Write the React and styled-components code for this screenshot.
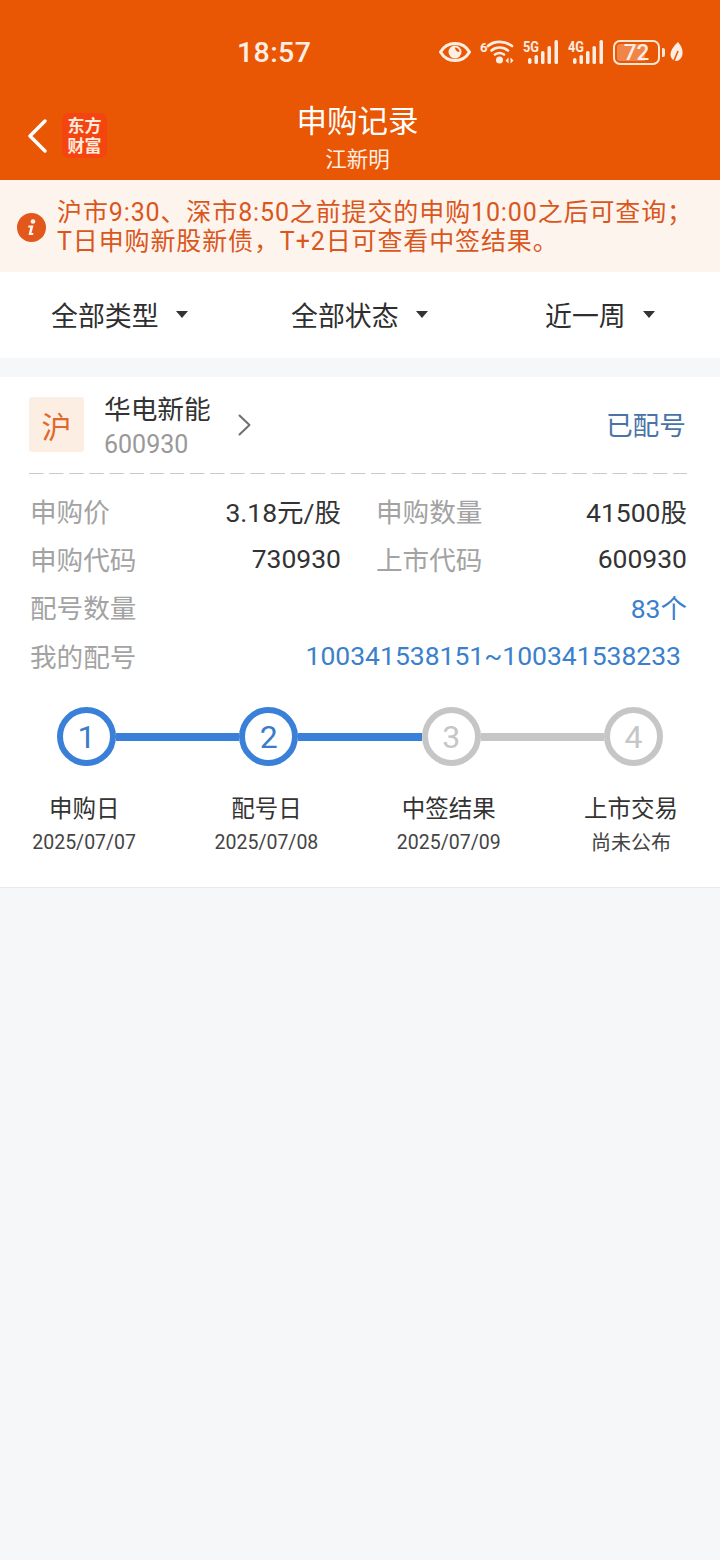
import React from 'react';
import styled, { createGlobalStyle } from 'styled-components';

const GlobalStyle = createGlobalStyle`
  html, body { margin: 0; padding: 0; background: #f6f7f9; }
  body { font-family: Roboto, "Noto Sans CJK SC", sans-serif; }
  * { box-sizing: border-box; }
`;

const Page = styled.div`
  width: 720px;
  height: 1560px;
  background: #f6f7f9;
  overflow: hidden;
`;

const Header = styled.header`
  height: 180px;
  background: #ea5704;
  color: #fff;
  display: flex;
  flex-direction: column;
`;

const StatusBar = styled.div`
  height: 100px;
  display: flex;
  align-items: center;
  padding: 4px 37px 0 237px;
  justify-content: space-between;
`;

const Clock = styled.span`
  font-size: 28.5px;
  font-weight: 500;
  letter-spacing: 0.4px;
  color: #fdeee4;
`;

const StatusIcons = styled.div`
  display: flex;
  align-items: center;
  gap: 9px;
`;

const SignalSvg = styled.svg`
  margin-top: -3px;
`;

const Battery = styled.div`
  display: flex;
  align-items: center;
  gap: 2px;
  margin-right: -4px;
`;

const BatteryBody = styled.div`
  width: 47px;
  height: 25px;
  border: 2px solid #fde6d6;
  border-radius: 7px;
  padding: 2px;
  position: relative;
  display: flex;
`;

const BatteryFill = styled.div`
  width: 72%;
  background: rgba(255, 255, 255, 0.28);
  border-radius: 3px 0 0 3px;
`;

const BatteryLevel = styled.span`
  position: absolute;
  inset: 0;
  display: flex;
  align-items: center;
  justify-content: center;
  font-size: 22.5px;
  font-weight: 500;
  color: #fdeee4;
`;

const BatteryCap = styled.div`
  width: 3px;
  height: 9px;
  background: #fde6d6;
  border-radius: 0 2px 2px 0;
`;

const NavBar = styled.div`
  height: 80px;
  display: flex;
  position: relative;
  align-items: flex-start;
  padding-left: 27px;
`;

const BackLink = styled.div`
  display: flex;
  align-items: center;
  gap: 15px;
  margin-top: 13px;
`;

const BrandMark = styled.div`
  width: 45px;
  height: 45px;
  border-radius: 7px;
  background: #f4440f;
  color: #ffeadd;
  font-size: 17px;
  line-height: 20px;
  font-weight: 700;
  text-align: center;
  padding-top: 3px;
`;

const NavTitle = styled.div`
  position: absolute;
  left: 0;
  right: 5px;
  top: 0;
  text-align: center;
`;

const TitleText = styled.div`
  font-size: 30.5px;
  line-height: 44px;
  color: #fff;
`;

const SubTitle = styled.div`
  font-size: 21.5px;
  line-height: 30px;
  margin-top: 1px;
  color: #fdeee4;
`;

const Notice = styled.div`
  height: 92px;
  background: #fef4ee;
  display: flex;
  align-items: center;
  padding: 2px 0 0 17px;
  gap: 11px;
  color: #d9571c;
`;

const NoticeText = styled.div`
  font-size: 25px;
  line-height: 29px;
  white-space: nowrap;
  letter-spacing: 0.88px;
`;

const Filters = styled.div`
  height: 86px;
  background: #fff;
  display: flex;
  align-items: center;
  margin-bottom: 19px;
  padding: 0 0 2px 51px;
`;

const Filter = styled.div`
  display: flex;
  align-items: center;
  gap: 17px;
  width: ${p => p.$width}px;
  font-size: 26.9px;
  color: #2e2e2e;
`;

const Caret = styled.span`
  width: 0;
  height: 0;
  border-left: 6.5px solid transparent;
  border-right: 6.5px solid transparent;
  border-top: 7px solid #333;
`;

const Card = styled.section`
  height: 511px;
  background: #fff;
  border-bottom: 1px solid #e9e9ec;
  padding: 20px 33px 0 29px;
`;

const StockHead = styled.div`
  height: 76px;
  display: flex;
  align-items: flex-start;
`;

const MarketBadge = styled.div`
  width: 55px;
  height: 55px;
  border-radius: 3px;
  background: #fdeee4;
  color: #e2672a;
  font-size: 30px;
  display: flex;
  align-items: center;
  justify-content: center;
`;

const StockInfo = styled.div`
  margin-left: 20px;
  width: 134px;
`;

const StockName = styled.div`
  font-size: 26.7px;
  line-height: 26px;
  color: #333;
`;

const StockCode = styled.div`
  font-size: 25px;
  line-height: 30px;
  margin-top: 7px;
  color: #999;
`;

const ChevronSlot = styled.div`
  margin-top: 17px;
  display: flex;
`;

const StockState = styled.div`
  margin-left: auto;
  margin-right: 1px;
  margin-top: 12px;
  font-size: 26.7px;
  line-height: 34px;
  color: #4a74a8;
`;

const Dashes = styled.div`
  height: 1px;
  background-image: linear-gradient(to right, #c9c9c9 0 14px, transparent 14px 20.125px);
  background-size: 20.125px 1px;
`;

const Details = styled.div`
  display: grid;
  grid-template-columns: 311px 311px;
  column-gap: 35px;
  grid-auto-rows: 48.3px;
  padding: 12px 0 0 1px;
  margin-right: -1px;
  align-items: center;
`;

const Field = styled.div`
  display: flex;
  justify-content: space-between;
  align-items: center;
  grid-column: ${p => (p.$wide ? '1 / -1' : 'auto')};
  white-space: nowrap;
`;

const FieldLabel = styled.span`
  font-size: 26.6px;
  color: #a3a3a3;
`;

const FieldValue = styled.span`
  font-size: 26.5px;
  color: ${p => (p.$blue ? '#3a80cc' : '#333')};
  margin-right: ${p => p.$inset || 0}px;
`;

const Rail = styled.div`
  display: flex;
  align-items: center;
  margin: 28px 24px 0 28px;
`;

const Dot = styled.div`
  width: 59px;
  height: 59px;
  flex: none;
  border-radius: 50%;
  border: 6px solid ${p => (p.$on ? '#3a80d8' : '#c6c6c6')};
  color: ${p => (p.$on ? '#3a7cc8' : '#c6c6c6')};
  font-size: 32px;
  display: flex;
  align-items: center;
  justify-content: center;
`;

const Link = styled.div`
  flex: 1;
  height: 8px;
  background: ${p => (p.$on ? '#3a80d8' : '#c6c6c6')};
`;

const Steps = styled.div`
  display: grid;
  grid-template-columns: repeat(4, 182.3px);
  margin: 27px 0 0 -36px;
`;

const Step = styled.div`
  text-align: center;
`;

const StepName = styled.div`
  font-size: 23.5px;
  line-height: 32px;
  color: #333;
`;

const StepDate = styled.div`
  font-size: ${p => (p.$pending ? '20px' : '19.5px')};
  line-height: 30px;
  margin-top: 3px;
  color: #444;
`;

const ICON = '#fdeee4';

const EyeIcon = () => (
  <svg width="32" height="20" viewBox="0 0 32 20">
    <path d="M1.500 10C5 4 10 1.500 16 1.500S27 4 30.500 10C27 16 22 18.500 16 18.500S5 16 1.500 10Z" fill="none" stroke={ICON} strokeWidth="3" />
    <circle cx="16" cy="10" r="6.500" fill={ICON} />
    <path d="M16 5.500A4.500 4.500 0 0 1 20.500 10A4.500 4.500 0 0 1 16 5.500Z" fill="#ea5704" />
  </svg>
);

const WifiIcon = () => (
  <svg width="34" height="24" viewBox="0 0 34 24">
    <text x="0" y="12" fontSize="13" fontWeight="700" fill={ICON} fontFamily="Roboto, sans-serif">6</text>
    <path d="M8 6C14 0.500 25 0.500 32 6M11.500 10.500C16 6.500 23 6.500 28 10.500M15 14.500C18 12.500 21 12.500 24 14.500" fill="none" stroke={ICON} strokeWidth="2.600" strokeLinecap="round" />
    <circle cx="19.500" cy="20" r="3.500" fill={ICON} />
    <path d="M25.500 20.500l3-3v6zM33.500 20.500l-3-3v6z" fill={ICON} />
  </svg>
);

// network type plus a five step signal bar
const SignalIcon = ({ label }) => (
  <SignalSvg width="36" height="27" viewBox="0 -3 36 27">
    <text x="0" y="12" fontSize="15" fontWeight="700" fill={ICON} fontFamily="Roboto, sans-serif" textLength="16" lengthAdjust="spacingAndGlyphs">{label}</text>
    <rect x="5" y="18" width="3.500" height="6" rx="1.700" fill={ICON} />
    <rect x="11.500" y="15" width="3.500" height="9" rx="1.500" fill={ICON} />
    <rect x="18" y="11" width="3.500" height="13" rx="1.500" fill={ICON} />
    <rect x="24.500" y="6" width="3.500" height="18" rx="1.500" fill={ICON} />
    <rect x="31.500" y="0" width="3.500" height="24" rx="1.500" fill={ICON} />
  </SignalSvg>
);

const LeafIcon = () => (
  <svg width="13" height="21" viewBox="0 0 13 21">
    <path d="M8 0C11.500 4 13 8 12.500 12C12 16 9.500 18.500 6.500 19C3 19 0.500 16 0.500 12.500C0.500 8.500 4 3.500 8 0Z" fill={ICON} />
    <path d="M3 21L8 9" fill="none" stroke="#ea5704" strokeWidth="1.600" />
  </svg>
);

const BackIcon = () => (
  <svg width="20" height="34" viewBox="0 0 20 34">
    <path d="M18 2L3 17L18 32" fill="none" stroke="#fff" strokeWidth="3.500" strokeLinecap="round" strokeLinejoin="round" />
  </svg>
);

const InfoIcon = () => (
  <svg width="29" height="29" viewBox="0 0 29 29">
    <circle cx="14.500" cy="14.500" r="14.500" fill="#e2581a" />
    <circle cx="16" cy="8.500" r="2.300" fill="#fdf3ee" />
    <path d="M11.500 12.500H16.500L14.500 20H16.500L16 22H11.500L13.300 14.500H11Z" fill="#fdf3ee" />
  </svg>
);

const ChevronIcon = () => (
  <svg width="13" height="22" viewBox="0 0 13 22">
    <path d="M1.500 1.500L11.500 11L1.500 20.500" fill="none" stroke="#6f6f6f" strokeWidth="2" strokeLinecap="round" strokeLinejoin="round" />
  </svg>
);

const STEPS = [
  { name: '申购日', date: '2025/07/07' },
  { name: '配号日', date: '2025/07/08' },
  { name: '中签结果', date: '2025/07/09' },
  { name: '上市交易', date: '尚未公布', pending: true },
];

export default function App() {
  return (
    <Page>
      <GlobalStyle />
      <Header>
        <StatusBar>
          <Clock>18:57</Clock>
          <StatusIcons>
            <EyeIcon />
            <WifiIcon />
            <SignalIcon label="5G" />
            <SignalIcon label="4G" />
            <Battery>
              <BatteryBody>
                <BatteryFill />
                <BatteryLevel>72</BatteryLevel>
              </BatteryBody>
              <BatteryCap />
            </Battery>
            <LeafIcon />
          </StatusIcons>
        </StatusBar>
        <NavBar>
          <NavTitle>
            <TitleText>申购记录</TitleText>
            <SubTitle>江新明</SubTitle>
          </NavTitle>
          <BackLink>
            <BackIcon />
            <BrandMark>东方<br />财富</BrandMark>
          </BackLink>
        </NavBar>
      </Header>

      <Notice>
        <InfoIcon />
        <NoticeText>
          沪市9:30、深市8:50之前提交的申购10:00之后可查询；<br />
          T日申购新股新债，T+2日可查看中签结果。
        </NoticeText>
      </Notice>

      <Filters>
        <Filter $width={240}>全部类型<Caret /></Filter>
        <Filter $width={254}>全部状态<Caret /></Filter>
        <Filter $width={120}>近一周<Caret /></Filter>
      </Filters>

      <Card>
        <StockHead>
          <MarketBadge>沪</MarketBadge>
          <StockInfo>
            <StockName>华电新能</StockName>
            <StockCode>600930</StockCode>
          </StockInfo>
          <ChevronSlot><ChevronIcon /></ChevronSlot>
          <StockState>已配号</StockState>
        </StockHead>
        <Dashes />
        <Details>
          <Field><FieldLabel>申购价</FieldLabel><FieldValue>3.18元/股</FieldValue></Field>
          <Field><FieldLabel>申购数量</FieldLabel><FieldValue>41500股</FieldValue></Field>
          <Field><FieldLabel>申购代码</FieldLabel><FieldValue>730930</FieldValue></Field>
          <Field><FieldLabel>上市代码</FieldLabel><FieldValue>600930</FieldValue></Field>
          <Field $wide><FieldLabel>配号数量</FieldLabel><FieldValue $blue>83个</FieldValue></Field>
          <Field $wide><FieldLabel>我的配号</FieldLabel><FieldValue $blue $inset={6}>100341538151~100341538233</FieldValue></Field>
        </Details>
        <Rail>
          <Dot $on>1</Dot>
          <Link $on />
          <Dot $on>2</Dot>
          <Link $on />
          <Dot>3</Dot>
          <Link />
          <Dot>4</Dot>
        </Rail>
        <Steps>
          {STEPS.map(s => (
            <Step key={s.name}>
              <StepName>{s.name}</StepName>
              <StepDate $pending={s.pending}>{s.date}</StepDate>
            </Step>
          ))}
        </Steps>
      </Card>
    </Page>
  );
}
